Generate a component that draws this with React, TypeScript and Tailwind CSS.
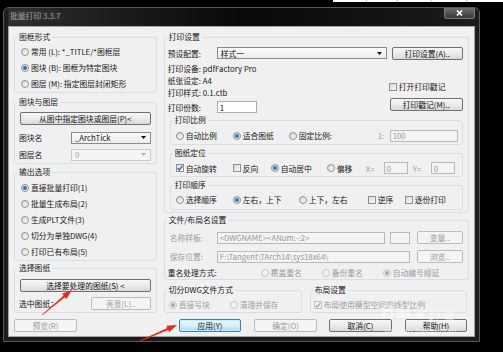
import type { ReactNode } from "react";

const DIM = "text-[#9d9d9d]";

function Radio({ checked = false, disabled = false }: { checked?: boolean; disabled?: boolean }) {
  return (
    <span
      className={`flex h-[8px] w-[8px] shrink-0 items-center justify-center rounded-full border ${
        disabled
          ? "border-[#c4c4c4] bg-[#f3f3f3]"
          : "border-[#8e8f8f] bg-linear-to-br from-[#d6d6d6] to-[#fbfbfb]"
      }`}
    >
      {checked && (
        <span className={`h-[4px] w-[4px] rounded-full ${disabled ? "bg-[#a8a8a8]" : "bg-[#2d72bd]"}`} />
      )}
    </span>
  );
}

function Check({ checked = false, disabled = false }: { checked?: boolean; disabled?: boolean }) {
  return (
    <span
      className={`flex h-[8px] w-[8px] shrink-0 items-center justify-center border ${
        disabled
          ? "border-[#c4c4c4] bg-[#f3f3f3]"
          : "border-[#8e8f8f] bg-linear-to-br from-[#d9d9d9] to-[#fcfcfc]"
      }`}
    >
      {checked && (
        <svg width="6" height="6" viewBox="0 0 6 6">
          <path d="M0.6 3.2 L2.3 4.9 L5.4 0.9" fill="none" stroke={disabled ? "#a8a8a8" : "#3f5b95"} strokeWidth="1.3" />
        </svg>
      )}
    </span>
  );
}

function Opt({
  kind = "radio",
  checked = false,
  disabled = false,
  label,
  className = "",
}: {
  kind?: "radio" | "check";
  checked?: boolean;
  disabled?: boolean;
  label: string;
  className?: string;
}) {
  return (
    <div className={`flex shrink-0 items-center gap-[2px] ${className}`}>
      {kind === "radio" ? <Radio checked={checked} disabled={disabled} /> : <Check checked={checked} disabled={disabled} />}
      <span className={`whitespace-nowrap ${disabled ? DIM : "text-[#151515]"}`}>{label}</span>
    </div>
  );
}

function Btn({
  children,
  className = "",
  disabled = false,
  focused = false,
}: {
  children: ReactNode;
  className?: string;
  disabled?: boolean;
  focused?: boolean;
}) {
  const look = disabled
    ? "border-[#b8bcbf] bg-[#f4f4f4] text-[#9a9a9a]"
    : focused
      ? "border-[#3c7fb1] bg-linear-to-b from-[#eaf6fd] via-[#d9f0fc] to-[#a7d9f5] text-[#111] shadow-[inset_0_0_0_1px_#c8eefc]"
      : "border-[#707070] bg-linear-to-b from-[#f6f6f6] via-[#ebebeb] to-[#d8d8d8] text-[#111]";
  return (
    <button
      type="button"
      className={`flex h-[13px] shrink-0 items-center justify-center whitespace-nowrap rounded-[2px] border leading-none ${look} ${className}`}
    >
      {children}
    </button>
  );
}

function Field({ value, className = "", disabled = false }: { value: string; className?: string; disabled?: boolean }) {
  return (
    <div
      className={`flex h-[12px] shrink-0 items-center overflow-hidden whitespace-nowrap border px-[2px] leading-none ${
        disabled ? "border-[#b9b9b9] bg-[#f4f4f4] text-[#9a9a9a]" : "border-[#abadb3] bg-white text-[#111]"
      } ${className}`}
    >
      {value}
    </div>
  );
}

function Combo({ value, className = "", disabled = false }: { value: string; className?: string; disabled?: boolean }) {
  return (
    <div
      className={`flex h-[12px] shrink-0 items-center justify-between border pl-[3px] pr-[4px] leading-none ${
        disabled
          ? "border-[#c9c9c9] bg-[#f4f4f4] text-[#a8a8a8]"
          : "border-[#8a8a8a] bg-linear-to-b from-[#fbfbfb] to-[#ececec] text-[#111]"
      } ${className}`}
    >
      <span>{value}</span>
      <svg width="5" height="3" viewBox="0 0 5 3">
        <path d="M0 0 H5 L2.5 3 Z" fill={disabled ? "#b0b0b0" : "#111"} />
      </svg>
    </div>
  );
}

function Group({ title, className = "", children }: { title: string; className?: string; children: ReactNode }) {
  return (
    <div className={`flex flex-col rounded-[3px] border border-[#d5dfe5] ${className}`}>
      <span className="-mt-[7px] ml-[2px] self-start bg-[#f0f0f0] px-[2px] leading-[12px] text-[#151515]">{title}</span>
      {children}
    </div>
  );
}

function Row({ children, className = "" }: { children: ReactNode; className?: string }) {
  return <div className={`flex items-center ${className}`}>{children}</div>;
}

export default function App() {
  return (
    <div className="relative h-[352px] w-[503px] overflow-hidden bg-black font-['Noto_Sans_CJK_SC','Noto_Sans',sans-serif] text-[7.8px] text-[#151515]">
      {/* background window edge at top */}
      <div className="flex h-[7px] items-start">
        <div className="ml-[333px] flex h-[2px] flex-1 bg-white">
          <div className="w-[34px] border-r border-[#cfcfcf]" />
          <div className="w-[31px] border-r border-[#cfcfcf]" />
          <div className="w-[34px] border-r border-[#cfcfcf]" />
          <div className="w-[35px] border-r border-[#cfcfcf]" />
        </div>
      </div>

      {/* dialog */}
      <div className="ml-[3px] flex h-[335px] w-[477px] flex-col rounded-t-[6px] border border-[#595959] bg-[#1d1d1d] px-[4px] pb-[4px]">
        <div className="flex h-[18px] items-start bg-linear-to-r from-[#2e2e2e] via-[#090909] to-[#1b1b1b]">
          <span className="mt-[4px] ml-[2px] leading-none text-[#9aa096] [text-shadow:0_0_4px_#6a6a6a]">批量打印 3.3.7</span>
          <div className="mt-[0px] mr-[0px] ml-auto flex h-[11px] w-[31px] items-center justify-center rounded-b-[3px] border border-t-0 border-[#7b7b7b] bg-linear-to-b from-[#6f6f6f] to-[#3a3a3a]">
            <svg width="7" height="6" viewBox="0 0 7 6">
              <path d="M1 0.5 L6 5.5 M6 0.5 L1 5.5" stroke="#fff" strokeWidth="1.6" />
            </svg>
          </div>
        </div>

        <div className="flex h-[312px] flex-col border border-[#a3a3a3] bg-[#f0f0f0] px-[5px] pt-[10px]">
          <div className="flex items-start gap-[7px]">
            {/* left column */}
            <div className="flex w-[143px] flex-col">
              <Group title="图框形式">
                <div className="flex flex-col pt-[1px] pl-[6px]">
                  <Row className="h-[16px]">
                    <Opt label="常用 (L):  *_TITLE/*图框层" />
                  </Row>
                  <Row className="h-[16px]">
                    <Opt checked label="图块 (B):  图框为特定图块" />
                  </Row>
                  <Row className="h-[16px]">
                    <Opt label="图层 (M):  指定图层封闭矩形" />
                  </Row>
                </div>
              </Group>

              <Group title="图块与图层" className="mt-[9px]">
                <div className="flex flex-col px-[5px] pb-[2px]">
                  <Btn className="mt-[4px] w-full">从图中指定图块或图层(P)&lt;</Btn>
                  <Row className="mt-[7px] h-[12px]">
                    <span className="w-[52px] -ml-[1px]">图块名</span>
                    <Combo value="_ArchTick" className="flex-1" />
                  </Row>
                  <Row className="mt-[5px] h-[12px]">
                    <span className="w-[52px] -ml-[1px]">图层名</span>
                    <Combo value="0" disabled className="flex-1" />
                  </Row>
                </div>
              </Group>

              <Group title="输出选项" className="mt-[8px]">
                <div className="flex flex-col pt-[2px] pl-[6px]">
                  <Row className="h-[16px]">
                    <Opt checked label="直接批量打印(1)" />
                  </Row>
                  <Row className="h-[16px]">
                    <Opt label="批量生成布局(2)" />
                  </Row>
                  <Row className="h-[16px]">
                    <Opt label="生成PLT文件(3)" />
                  </Row>
                  <Row className="h-[16px]">
                    <Opt label="切分为单独DWG(4)" />
                  </Row>
                  <Row className="h-[16px]">
                    <Opt label="打印已有布局(5)" />
                  </Row>
                </div>
              </Group>

              <Group title="选择图纸" className="mt-[7px]">
                <div className="flex flex-col px-[5px] pb-[2px]">
                  <Btn className="mt-[5px] w-full">选择要处理的图纸(S) &lt;</Btn>
                  <Row className="mt-[6px] h-[12px] justify-between">
                    <span className="-ml-[1px]">选中图纸：</span>
                    <Btn disabled className="h-[12px] w-[60px]">
                      亮显(L)..
                    </Btn>
                  </Row>
                </div>
              </Group>
            </div>

            {/* right column */}
            <div className="flex w-[306px] flex-col">
              <Group title="打印设置">
                <div className="flex flex-col pl-[3px] pb-[2px]">
                  <Row className="mt-[4px] h-[13px]">
                    <span className="w-[49px]">预设配置:</span>
                    <Combo value="样式一" className="w-[170px]" />
                    <Btn className="ml-[5px] w-[71px]">打印设置(A)..</Btn>
                  </Row>
                  <div className="mt-[3px] flex">
                    <div className="flex w-[221px] flex-col">
                      <span className="leading-[12px]">打印设备: pdfFactory Pro</span>
                      <span className="leading-[12px]">纸张设定: A4</span>
                      <span className="leading-[12px]">打印样式: 0.1.ctb</span>
                      <Row className="mt-[3px] h-[11px]">
                        <span className="w-[49px]">打印份数:</span>
                        <Field value="1" className="h-[11px] w-[40px]" />
                      </Row>
                    </div>
                    <div className="flex flex-col pt-[18px]">
                      <Row className="h-[12px]">
                        <Opt kind="check" label="打开打印戳记" />
                      </Row>
                      <Btn className="mt-[5px] ml-[1px] w-[73px]">打印戳记(M)..</Btn>
                    </div>
                  </div>

                  <Group title="打印比例" className="mt-[7px] ml-[2px] w-[293px]">
                    <Row className="h-[14px] pt-[0px] mt-[3px] mb-[1px] pl-[5px]">
                      <Opt checked={false} label="自动比例" className="w-[57px]" />
                      <Opt checked label="适合图纸" className="w-[56px]" />
                      <Opt label="固定比例:" className="w-[89px]" />
                      <span className={`w-[12px] ${DIM}`}>1:</span>
                      <Field value="100" disabled className="h-[11px] w-[68px]" />
                    </Row>
                  </Group>

                  <Group title="图纸定位" className="mt-[8px] ml-[2px] w-[293px]">
                    <Row className="mt-[2px] h-[15px] pl-[5px]">
                      <Opt kind="check" checked label="自动旋转" className="w-[57px]" />
                      <Opt kind="check" label="反向" className="w-[38px]" />
                      <Opt checked label="自动居中" className="w-[56px]" />
                      <Opt label="偏移" className="w-[39px]" />
                      <span className={`w-[18px] ${DIM}`}>X=</span>
                      <Field value="0" disabled className="w-[24px]" />
                      <span className={`w-[23px] pl-[5px] ${DIM}`}>Y=</span>
                      <Field value="0" disabled className="w-[24px]" />
                    </Row>
                  </Group>

                  <Group title="打印顺序" className="mt-[8px] ml-[2px] w-[293px]">
                    <Row className="mt-[2px] mb-[2px] h-[14px] pl-[5px]">
                      <Opt label="选择顺序" className="w-[57px]" />
                      <Opt checked label="左右，上下" className="w-[66px]" />
                      <Opt label="上下，左右" className="w-[69px]" />
                      <Opt kind="check" label="逆序" className="w-[37px]" />
                      <Opt kind="check" label="逐份打印" />
                    </Row>
                  </Group>
                </div>
              </Group>

              <Group title="文件/布局名设置" className="mt-[7px]">
                <div className="flex flex-col pl-[5px]">
                  <Row className="mt-[6px] h-[12px]">
                    <span className={`w-[47px] ${DIM}`}>名称样板:</span>
                    <Field value="<DWGNAME><ANum:-:2>" disabled className="w-[168px]" />
                    <Field value="" disabled className="ml-[5px] w-[20px]" />
                    <Btn disabled className="ml-[7px] h-[12px] w-[46px]">
                      变量..
                    </Btn>
                  </Row>
                  <Row className="mt-[7px] h-[12px]">
                    <span className={`w-[47px] ${DIM}`}>保存位置:</span>
                    <Field value="F:\Tangent\TArch14\sys18x64\" disabled className="w-[193px]" />
                    <Btn disabled className="ml-[7px] h-[12px] w-[46px]">
                      浏览..
                    </Btn>
                  </Row>
                  <Row className="mt-[4px] h-[12px] -ml-[2px]">
                    <span className="w-[93px]">重名处理方式:</span>
                    <Opt disabled label="覆盖重名" className="w-[61px]" />
                    <Opt disabled label="备份重名" className="w-[61px]" />
                    <Opt disabled checked label="自动编号顺延" />
                  </Row>
                </div>
              </Group>

              <div className="mt-[10px] flex gap-[8px]">
                <Group title="切分DWG文件方式" className="w-[138px]">
                  <Row className="mt-[2px] h-[14px] pl-[4px]">
                    <Opt disabled checked label="直接写块" className="w-[61px]" />
                    <Opt disabled label="清理并保存" />
                  </Row>
                </Group>
                <Group title="布局设置" className="mr-[2px] flex-1">
                  <Row className="mt-[2px] h-[14px] pl-[3px]">
                    <Opt kind="check" disabled checked label="布局使用模型空间的线型比例" />
                  </Row>
                </Group>
              </div>
            </div>
          </div>

          {/* dialog buttons */}
          <Row className="mt-[6px]">
            <Btn disabled className="w-[63px]">
              预览(R)
            </Btn>
            <Btn focused className="ml-[102px] w-[62px]">
              应用(Y)
            </Btn>
            <Btn disabled className="ml-[13px] w-[63px]">
              确定(O)
            </Btn>
            <Btn className="ml-[12px] w-[63px]">取消(C)</Btn>
            <Btn className="ml-[13px] w-[62px]">帮助(H)</Btn>
          </Row>
        </div>
      </div>

      {/* annotation arrows */}
      <svg className="pointer-events-none absolute top-0 left-0" width="503" height="352" viewBox="0 0 503 352">
        <polygon
          points="42.2,315.2 64.9,297.2 66.5,299.1 72,290 62.1,293.7 63.7,295.6 41.8,314.8"
          fill="#e8291d"
        />
        <polygon
          points="140.1,341.4 168.2,329.9 169.2,332.2 177,325 166.4,325.8 167.4,328.1 139.9,340.6"
          fill="#e8291d"
        />
      </svg>

      {/* watermark */}
      <div className="pointer-events-none absolute top-[302px] left-[381px] flex flex-col items-start leading-none text-white opacity-50">
        <div className="flex items-end">
          <span className="font-['Liberation_Sans',sans-serif] text-[19px] font-bold">Bai</span>
          <svg width="16" height="16" viewBox="0 0 16 16" className="mx-[1px] mb-[1px]">
            <ellipse cx="8" cy="11" rx="4" ry="3.5" fill="#fff" />
            <circle cx="3" cy="7" r="1.6" fill="#fff" />
            <circle cx="6" cy="3.5" r="1.6" fill="#fff" />
            <circle cx="10" cy="3.5" r="1.6" fill="#fff" />
            <circle cx="13" cy="7" r="1.6" fill="#fff" />
          </svg>
          <span className="mb-[1px] text-[13px]">经验</span>
        </div>
        <span className="mt-[6px] ml-[3px] font-['Liberation_Sans',sans-serif] text-[9px]">jingyan.baidu.com</span>
      </div>
    </div>
  );
}
